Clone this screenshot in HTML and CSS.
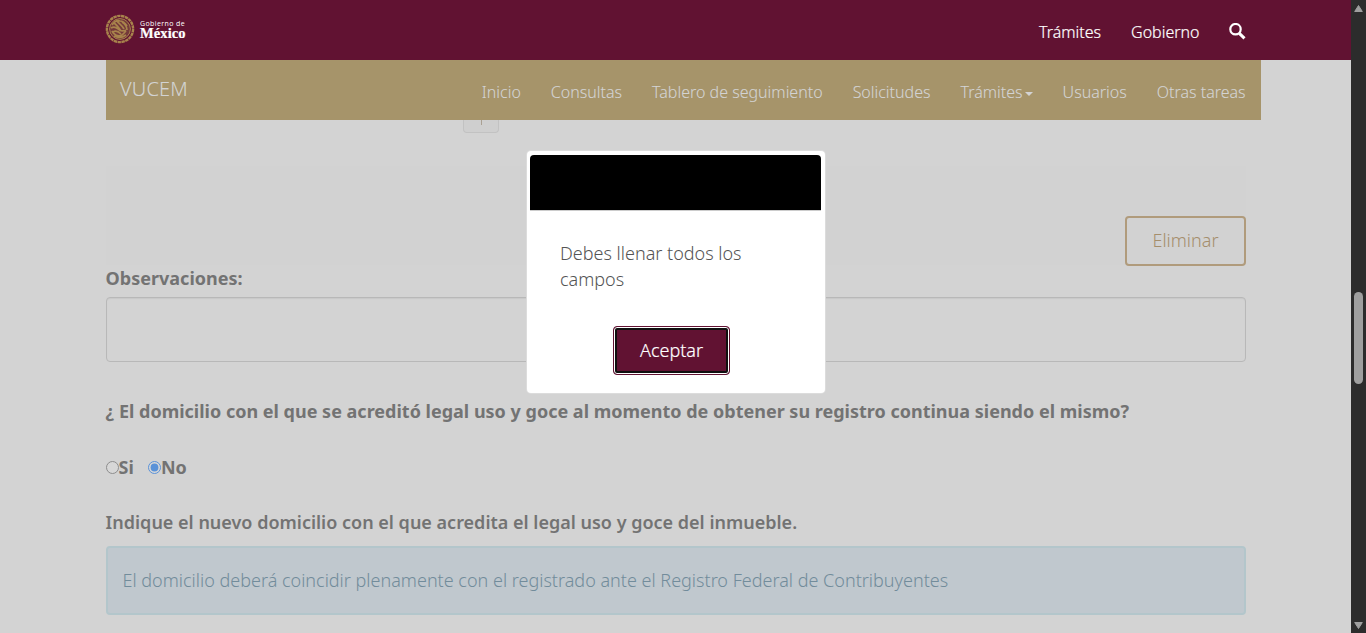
FILE: index.html
```html
<!DOCTYPE html>
<html lang="es">
<head>
<meta charset="utf-8">
<title>VUCEM</title>
<link rel="stylesheet" href="styles.css">
</head>
<body>
<div class="screen">
  <div class="page">
    <header class="topbar">
      <div class="brand">
        <svg class="seal" viewBox="0 0 30 30" fill="none" stroke="#a8834c">
          <circle cx="15" cy="15" r="13.1" stroke-width="2.4" stroke-dasharray="3.4 .5"/>
          <circle cx="15" cy="15" r="10.4" fill="#74393a" stroke-width="1"/>
          <path d="M7 11c2-3 5-5 8-4 3 0 5 2 7 5M6 14c3-2 5-1 7 1s4 3 8 1M9 9c3 2 5 5 7 8M12 7c2 3 5 4 7 8M8 18c3-2 6 0 8 2M17 8c3 2 5 4 5 8M9 22c4 2 8 2 12-1M7 17c2 4 6 6 10 4l4-4" stroke-width="1.7"/>
        </svg>
        <div class="wordmark"><span class="word-small">Gobierno de</span><span class="word-large">México</span></div>
      </div>
      <nav class="topnav">
        <a>Trámites</a><a>Gobierno</a>
        <svg class="search" viewBox="0 0 17 17" fill="none" stroke="#fff"><circle cx="6.5" cy="6.2" r="5.2" stroke-width="2.2"/><path d="M10.3 10.3l5.2 5" stroke-width="3"/></svg>
      </nav>
    </header>
    <nav class="subbar">
      <a class="title">VUCEM</a>
      <div class="menu">
        <a>Inicio</a><a>Consultas</a><a>Tablero de seguimiento</a><a>Solicitudes</a><a class="dropdown"><span>Trámites</span><i class="caret"></i></a><a>Usuarios</a><a>Otras tareas</a>
      </div>
    </nav>
    <main class="content">
      <div class="pager"><span class="pager-button"><i></i></span></div>
      <div class="actions"><button class="delete">Eliminar</button></div>
      <label class="label obs"><span>Observaciones:</span></label>
      <div class="textarea"></div>
      <p class="label question"><span>¿ El domicilio con el que se acreditó legal uso y goce al momento de obtener su registro continua siendo el mismo?</span></p>
      <div class="radios label">
        <svg class="radio" viewBox="0 0 13 13"><circle cx="6.5" cy="6.5" r="6" fill="#d7d7d7" stroke="#8d8d8d"/></svg><span class="yes">Si</span>
        <svg class="radio" viewBox="0 0 13 13"><circle cx="6.5" cy="6.5" r="6" fill="#d7d7d7" stroke="#5a92d8"/><circle cx="6.5" cy="6.5" r="3.9" fill="#5a92d8"/></svg><span class="no">No</span>
      </div>
      <p class="label indicate"><span>Indique el nuevo domicilio con el que acredita el legal uso y goce del inmueble.</span></p>
      <div class="alert"><span>El domicilio deberá coincidir plenamente con el registrado ante el Registro Federal de Contribuyentes</span></div>
    </main>
  </div>
  <aside class="scrollbar">
    <svg class="arrow" viewBox="0 0 15 15"><path d="M7.5 5.5L11.3 11.5H3.7z" fill="#9f9f9f" stroke="#9f9f9f" stroke-linejoin="round"/></svg>
    <div class="thumb"></div>
    <svg class="arrow" viewBox="0 0 15 15"><path d="M7.5 10.5L11.3 4.5H3.7z" fill="#9f9f9f" stroke="#9f9f9f" stroke-linejoin="round"/></svg>
  </aside>
  <div class="dialog" role="dialog">
    <div class="dialog-head"></div>
    <p class="dialog-text"><span>Debes llenar todos los</span><br><span>campos</span></p>
    <button class="accept"><span>Aceptar</span></button>
  </div>
</div>
</body>
</html>
```
FILE: styles.css
```css
* { box-sizing: border-box; }
body { margin: 0; font-family: "Noto Sans", "Open Sans", sans-serif; font-weight: 300; font-size: 18px; }
p { margin: 0; }
button { font: inherit; }
.screen { position: relative; display: flex; width: 1366px; height: 633px; overflow: hidden; background: #d3d3d3; }
.page { width: 1351px; }
.topbar { height: 60px; padding: 0 105px; display: flex; justify-content: space-between; background: #611232; color: #fff; }
.brand { display: flex; padding-top: 14px; }
.seal { width: 30px; height: 30px; }
.wordmark { display: flex; flex-direction: column; gap: 1px; margin-left: 5px; padding-top: 6px; font-family: "Liberation Serif", serif; font-weight: 700; }
.word-small { font: 500 7px/8px "Open Sans", sans-serif; letter-spacing: .4px; }
.word-large { font-size: 14.5px; line-height: 9px; letter-spacing: .1px; -webkit-text-stroke: .2px #fff; }
.topnav { display: flex; gap: 30px; padding-top: 20px; font-size: 16px; line-height: 24px; -webkit-text-stroke: .2px; }
.topnav a:nth-child(2) { margin-right: -.5px; }
.search { width: 17px; height: 17px; margin-top: 3px; }
.subbar { width: 1155px; height: 60px; margin-left: 106px; padding: 0 15.4px 0 14px; display: flex; justify-content: space-between; background: #a6946a; color: #d3d3d3; -webkit-text-stroke: .1px; }
.title { font-size: 20px; line-height: 58px; letter-spacing: .15px; }
.menu { display: flex; gap: 30px; font-size: 16px; line-height: 65px; }
.dropdown { display: flex; }
.caret { height: 4px; margin: 32px 0 0 2px; border: 4px solid transparent; border-top-color: #d3d3d3; border-bottom: 0; }
.content { padding: 0 105px 0 106px; color: #737373; }
.pager { height: 46px; padding-left: 357px; }
.pager-button { display: flex; justify-content: center; width: 36px; height: 13px; border: 1px solid #c2c2c2; border-top: 0; border-radius: 0 0 4px 4px; background: #cfcfcf; }
.pager-button i { width: 1px; height: 5px; background: #aaa092; }
.actions { height: 99px; padding-top: 50px; display: flex; justify-content: flex-end; background: #d2d2d2; }
.delete { width: 121px; height: 50px; padding: 0 0 2px; border: 2px solid #b09b7c; border-radius: 4px; background: transparent; color: #a58e6c; font-size: 18px; }
.label { display: block; font-weight: 700; font-size: 18px; line-height: 26px; white-space: nowrap; }
.label span { margin-left: -.4px; }
.obs { height: 32px; }
.textarea { height: 65px; border: 1px solid #b8b8b8; border-radius: 4px; box-shadow: inset 0 1px 1px #c8c8c8; }
.question { padding-top: 36px; }
.radios { display: flex; align-items: center; margin-top: 30px; }
.radio { width: 13px; height: 13px; margin-top: 1px; }
.yes { margin-right: 14.4px; }
.indicate { margin-top: 29px; font-weight: 600; }
.alert { height: 69px; margin-top: 11px; padding: 0 15px 2px 14.5px; display: flex; align-items: center; border: 2px solid #b3c6cb; border-radius: 4px; background: #c0c8ce; color: #728c9b; white-space: nowrap; }
.scrollbar { width: 15px; display: flex; flex-direction: column; align-items: center; background: #2c2c2c; }
.arrow { width: 15px; height: 15px; }
.thumb { width: 9px; height: 92px; margin: 277px 0 234px; border-radius: 5px; background: #9f9f9f; }
.dialog { position: absolute; left: 527px; top: 151px; width: 298px; height: 242px; padding: 4px 4px 0 3px; border-radius: 4px; background: #fff; box-shadow: 0 0 0 1px #dcdcdc; color: #545454; }
.dialog-head { height: 56px; background: #000; border-bottom: 1px solid #ccc; border-radius: 4px 4px 0 0; }
.dialog-text { padding: 29px 30px 0; line-height: 26px; white-space: nowrap; }
.accept { display: block; width: 117px; height: 49px; margin: 34px 0 0 83px; padding: 0 0 2px; border: 1px solid #611232; border-radius: 4px; background: #611232; color: #fff; box-shadow: inset 0 0 0 1px #fff, inset 0 0 0 3px #101010; -webkit-text-stroke: .2px; }
```
